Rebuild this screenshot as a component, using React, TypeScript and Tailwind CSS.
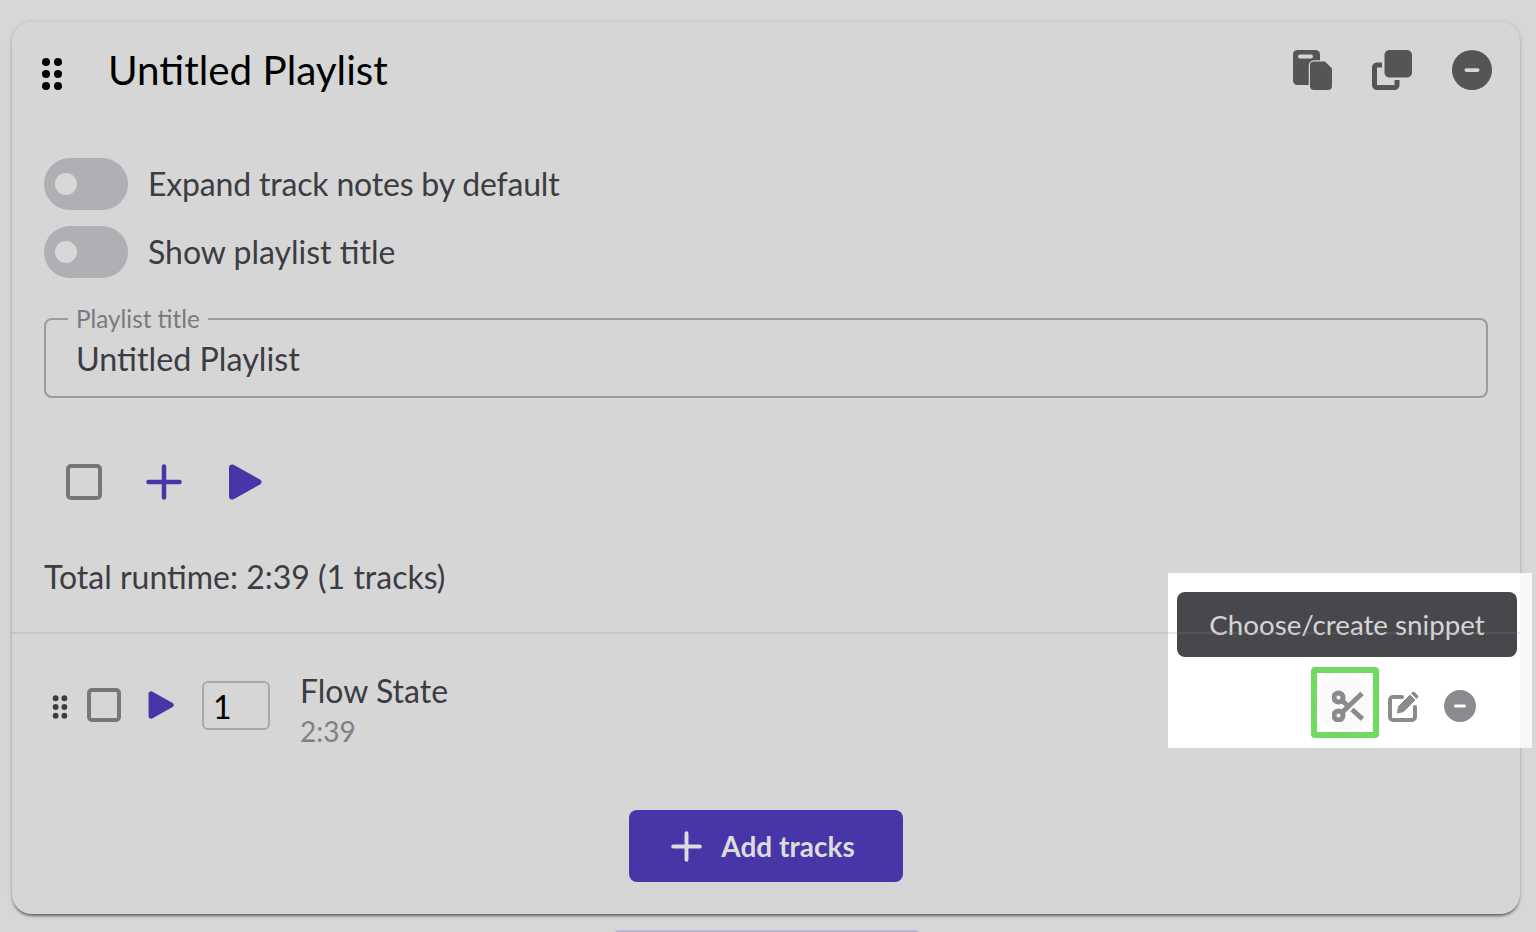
import { FaClone, FaCircleMinus } from "react-icons/fa6";

const Grip = ({ className }: { className: string }) => (
  <svg viewBox="0 0 22 34" className={className} fill="currentColor">
    <circle cx="5" cy="5" r="4" />
    <circle cx="17" cy="5" r="4" />
    <circle cx="5" cy="17" r="4" />
    <circle cx="17" cy="17" r="4" />
    <circle cx="5" cy="29" r="4" />
    <circle cx="17" cy="29" r="4" />
  </svg>
);

const Play = ({ className }: { className: string }) => (
  <svg viewBox="0 0 34 36" className={className} fill="currentColor">
    <path d="M1 3.5C1 1 3.5 -.3 5.6.8L32 15.5c2 1.1 2 3.900 0 5L5.600 35.200C3.500 36.300 1 35 1 32.500Z" />
  </svg>
);

const PlusIcon = ({ className }: { className: string }) => (
  <svg viewBox="0 0 36 36" className={className} fill="none" stroke="currentColor" strokeWidth="4.500" strokeLinecap="round">
    <path d="M18 2.500V33.500M2.500 18H33.500" />
  </svg>
);

const PasteIcon = ({ className }: { className: string }) => (
  <svg viewBox="0 0 40 40" className={className}>
    <rect x="1" y="0" width="27" height="35" rx="4.500" fill="currentColor" />
    <rect x="6" y="4.500" width="15" height="4" rx="2" fill="#d6d6d6" />
    <path
      d="M22 11.500H33L40 18.500V36a4 4 0 0 1-4 4H22a4 4 0 0 1-4-4V15.500a4 4 0 0 1 4-4Z"
      fill="currentColor"
      stroke="#d6d6d6"
      strokeWidth="2.500"
      paintOrder="stroke"
    />
  </svg>
);

const ScissorsIcon = ({ className }: { className: string }) => (
  <svg viewBox="0 0 32 32" className={className} fill="none" stroke="currentColor" strokeWidth="5">
    <circle cx="6.500" cy="7.500" r="4.500" />
    <circle cx="6.500" cy="25.500" r="4.500" />
    <path d="M10 22.500L30 3.500M10 10.500L15.500 15.500M20 19.500L30.500 29" />
  </svg>
);

const EditIcon = ({ className }: { className: string }) => (
  <svg viewBox="0 0 32 32" className={className}>
    <path
      d="M14 7H5a3 3 0 0 0-3 3V27a3 3 0 0 0 3 3H24a3 3 0 0 0 3-3V17"
      fill="none"
      stroke="currentColor"
      strokeWidth="4"
      strokeLinecap="round"
    />
    <path
      d="M9.500 23L10.500 16.500L22 5L27 10L15.500 21.500ZM24 3a2 2 0 0 1 3 0l2 2a2 2 0 0 1 0 3L28.500 8.500L23.500 3.500Z"
      fill="currentColor"
      stroke="currentColor"
      strokeLinejoin="round"
    />
  </svg>
);

const Toggle = ({ label, textClass }: { label: string; textClass: string }) => (
  <div className="flex items-center gap-5">
    <div className="flex h-[52px] w-[84px] items-center rounded-full bg-[#b0b0b4] pl-[11px]">
      <div className="h-[22px] w-[22px] rounded-full bg-[#d8d8d8]"></div>
    </div>
    <span className={textClass}>{label}</span>
  </div>
);

export default function App() {
  return (
    <div className="relative h-[932px] w-[1536px] overflow-hidden bg-[#d7d7d7] pt-[22px] pl-3 font-['Lato','Open_Sans',sans-serif]">
      <div className="flex h-[892px] w-[1508px] flex-col rounded-[20px] bg-[#d6d6d6] shadow-[0_3px_3px_-1px_rgba(0,0,0,0.5),0_0_5px_rgba(0,0,0,0.12)]">
        <div className="flex h-24 items-center pr-7 pl-[29px]">
          <Grip className="mt-2 h-[34px] w-[22px] text-black" />
          <h1 className="ml-[45px] text-[40.4px] leading-[48px] font-normal text-black">Untitled Playlist</h1>
          <div className="ml-auto flex items-center gap-10 text-[#555555]">
            <PasteIcon className="h-10 w-10" />
            <FaClone className="h-10 w-10" />
            <FaCircleMinus className="h-10 w-10" />
          </div>
        </div>

        <div className="mt-10 flex flex-col gap-4 pl-8">
          <Toggle label="Expand track notes by default" textClass="text-[32px] leading-10 tracking-[-0.18px] text-[#3c3c43]" />
          <Toggle label="Show playlist title" textClass="text-[32px] leading-10 text-[#3c3c43]" />
        </div>

        <fieldset className="mx-8 mt-[27px] h-[93px] rounded-lg border-2 border-[#9c9c9c] px-[22px]">
          <legend className="px-2 text-[24.3px] leading-7 text-[#7a7a7e]">Playlist title</legend>
          <div className="mt-1.5 pl-2 text-[32.3px] leading-10 text-[#3c3c43]">Untitled Playlist</div>
        </fieldset>

        <div className="mt-[66px] flex items-center pl-[54px]">
          <div className="h-9 w-9 rounded-[5px] border-4 border-[#77777b]"></div>
          <PlusIcon className="ml-11 h-9 w-9 text-[#4835a8]" />
          <Play className="ml-[46px] h-9 w-[34px] text-[#4835a8]" />
        </div>

        <div className="mt-[57px] pl-8 text-[32px] leading-10 text-[#3c3c43]">Total runtime: 2:39 (1 tracks)</div>

        <div className="mt-[35px] h-0.5 bg-[#c6c6c6]"></div>

        <div className="mt-[25px] flex items-center pl-10">
          <Grip className="mt-[3px] h-[26px] w-4 text-[#3c3c43]" />
          <div className="ml-[19px] h-[34px] w-[34px] rounded-[5px] border-4 border-[#77777b]"></div>
          <Play className="ml-[26px] h-7 w-7 text-[#4835a8]" />
          <div className="ml-[27px] flex h-[49px] w-[68px] items-center rounded-md border-2 border-[#a8a8a8] pt-1 pl-[9px] text-[32px] text-black">1</div>
          <div className="ml-[30px] flex flex-col pt-3">
            <span className="text-[32px] leading-10 text-[#3c3c43]">Flow State</span>
            <span className="text-[28px] leading-10 text-[#808085]">2:39</span>
          </div>
        </div>

        <button className="mx-auto mt-[59px] flex h-[72px] w-[274px] items-center justify-center gap-[19px] rounded-lg bg-[#4835a8] pr-[6px] text-[28px] font-bold text-[#dcdcdc]">
          <PlusIcon className="h-[31px] w-[31px]" />
          Add tracks
        </button>
      </div>

      <div className="mt-4 ml-[603px] h-1 w-[304px] rounded-t-lg bg-[#b9b5d3]"></div>

      {/* highlighted callout on top of the track row */}
      <div className="absolute top-[573px] left-[1168px] flex h-[175px] w-[364px] flex-col bg-white pt-[19px] pl-[9px]">
        <div className="absolute top-0 right-0 h-full w-3 bg-[#f7f7f7]"></div>
        <div className="relative flex h-[65px] w-[340px] items-center justify-center rounded-lg bg-[#48484c] text-[27.7px] text-[#d6d6d6]">Choose/create snippet</div>
        <div className="absolute top-[59px] left-0 h-0.5 w-[352px] bg-[#888888]/20"></div>
        <div className="relative mt-2.5 flex items-center pl-[134px] text-[#8a8a8f]">
          <div className="flex h-[71px] w-[68px] items-center justify-center rounded border-[6px] border-[#6fdb60]">
            <div className="flex h-[56px] w-[56px] items-center justify-center rounded-full bg-[#fafafa]">
              <ScissorsIcon className="mt-1.5 ml-1.5 h-8 w-8" />
            </div>
          </div>
          <EditIcon className="mt-1.5 ml-[9px] h-8 w-8" />
          <FaCircleMinus className="mt-1.5 ml-6 h-8 w-8" />
        </div>
      </div>
    </div>
  );
}
